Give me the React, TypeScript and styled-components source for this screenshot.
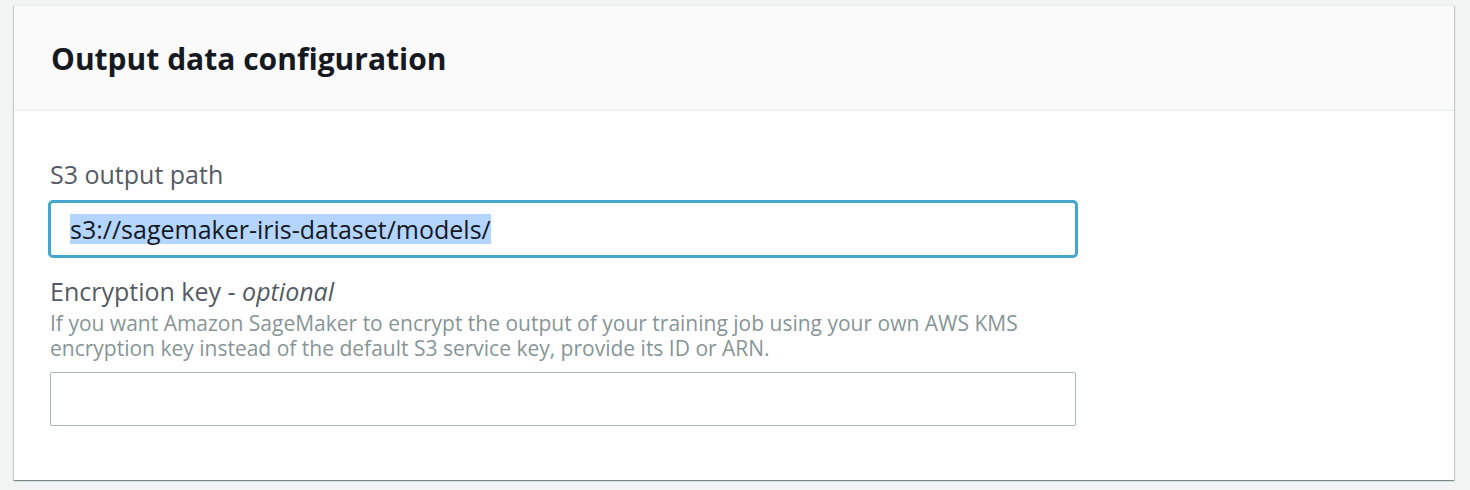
import React from "react";
import styled, { createGlobalStyle } from "styled-components";

const GlobalStyle = createGlobalStyle`
  html, body {
    margin: 0;
    padding: 0;
    background: #f2f3f3;
    font-family: "Open Sans", "Noto Sans", Arial, sans-serif;
  }
`;

const Page = styled.div`
  padding: 5px 16px 0 14px;
  height: 490px;
  box-sizing: border-box;
`;

const Panel = styled.section`
  background: #ffffff;
  box-shadow: 0 1px 1px 0 rgba(0, 28, 36, 0.3), 1px 1px 1px 0 rgba(0, 28, 36, 0.15),
    -1px 1px 1px 0 rgba(0, 28, 36, 0.15);
  border-top: 1px solid #eaeded;
`;

const PanelHeader = styled.header`
  background: #fafafa;
  border-bottom: 1px solid #eaeded;
  height: 104px;
  display: flex;
  align-items: center;
  padding: 0 37px;
`;

const Title = styled.h2`
  margin: 0;
  font-size: 30px;
  font-weight: 700;
  color: #16191f;
`;

const PanelBody = styled.div`
  padding: 46px 36px 54px;
  display: flex;
  flex-direction: column;
  gap: 18px;
`;

const Field = styled.div`
  display: flex;
  flex-direction: column;
`;

const Label = styled.label<{ hasHint?: boolean }>`
  font-size: 25px;
  line-height: 34px;
  color: #545b64;
  margin-bottom: ${({ hasHint }) => (hasHint ? "3px" : "11px")};

  em {
    font-style: italic;
  }
`;

const Description = styled.div`
  font-size: 21px;
  line-height: 25px;
  color: #879596;
  margin-bottom: 11px;
  max-width: 1000px;
`;

const InputBox = styled.div<{ focused?: boolean }>`
  box-sizing: border-box;
  width: 1026px;
  height: 54px;
  border: 1px solid ${({ focused }) => (focused ? "#44a6cc" : "#aab7b8")};
  border-radius: ${({ focused }) => (focused ? "3px" : "2px")};
  box-shadow: ${({ focused }) => (focused ? "0 0 0 2px #44a6cc" : "none")};
  background: #ffffff;
  display: flex;
  align-items: center;
  padding: 0 19px;
  font-size: 25px;
  color: #16191f;
`;

const Selected = styled.span`
  background: #b4d5fe;
  line-height: 30px;
`;

const App = () => (
  <Page>
    <GlobalStyle />
    <Panel>
      <PanelHeader>
        <Title>Output data configuration</Title>
      </PanelHeader>
      <PanelBody>
        <Field>
          <Label>S3 output path</Label>
          <InputBox focused>
            <Selected>s3://sagemaker-iris-dataset/models/</Selected>
          </InputBox>
        </Field>
        <Field>
          <Label hasHint>
            Encryption key - <em>optional</em>
          </Label>
          <Description>
            If you want Amazon SageMaker to encrypt the output of your training job using your own AWS KMS
            <br />
            encryption key instead of the default S3 service key, provide its ID or ARN.
          </Description>
          <InputBox />
        </Field>
      </PanelBody>
    </Panel>
  </Page>
);

export default App;
